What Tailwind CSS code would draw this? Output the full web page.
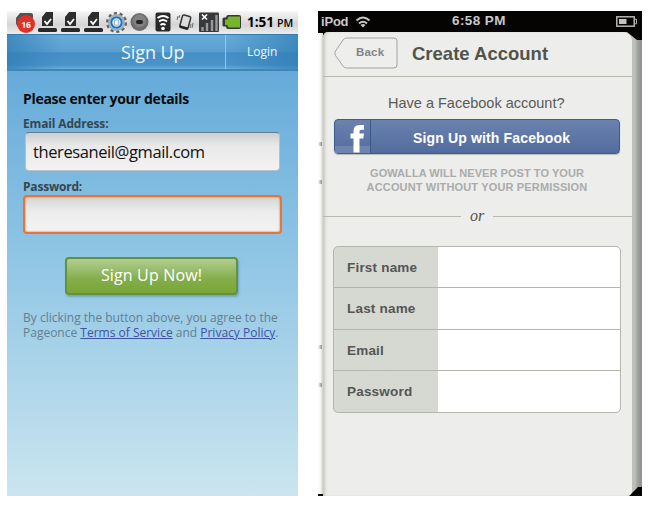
<!DOCTYPE html>
<html lang="en">
<head>
<meta charset="utf-8">
<title>Sign up screens</title>
<script src="https://cdn.jsdelivr.net/npm/@tailwindcss/browser@4"></script>
</head>
<body class="w-[655px] h-[509px] overflow-hidden bg-white">
<main class="flex gap-[20px] pl-[7px] pt-[11px]">

<!-- Pageonce -->
<section class="w-[291px] h-[485px] flex flex-col whitespace-nowrap font-['Open_Sans','Noto_Sans',sans-serif] bg-linear-to-b from-[#62a9d9] from-10% via-[#98cae6] via-58% to-[#cbe5ef]">
  <div class="h-[23px] shrink-0 flex bg-linear-to-b from-[#f6f6f6] via-[#d4d4d5] via-60% to-[#ededed]">
    <svg class="w-[236px] h-[23px]" viewBox="7 11 236 23">
      <path d="M16 18l4-5h11q2 0 2 2v15H20l-4-6z" fill="#575250"/>
      <circle cx="26" cy="24" r="9" fill="#df3127"/>
      <text x="26" y="27.6" text-anchor="middle" font-family="Open Sans, sans-serif" font-weight="700" font-size="8.5" fill="#fff">16</text>
      <g id="dl">
        <path d="M42 17l4-5h7v14H42z" fill="#2e2d2e"/>
        <rect x="38" y="28" width="19" height="4" rx="1.5" fill="#29292a"/>
        <path d="M44.500 21l2.500 3 4-5" fill="none" stroke="#fff" stroke-width="1.800"/>
      </g>
      <use href="#dl" x="23"/><use href="#dl" x="46"/>
      <circle cx="116.500" cy="22.500" r="9" fill="none" stroke="#625f5f" stroke-width="3" stroke-dasharray="3 2.650"/>
      <circle cx="116.500" cy="22.500" r="7.500" fill="#d9e5ee" stroke="#a3aeb6" stroke-width="2"/>
      <circle cx="116.500" cy="22.500" r="5.200" fill="#e6edf3" stroke="#1675bd" stroke-width="2"/>
      <rect x="114.500" y="20" width="4" height="5" fill="#f3f5f7" stroke="#a9b8c4"/>
      <circle cx="139.500" cy="22" r="9" fill="#6d6d6d"/>
      <circle cx="139.500" cy="21" r="6.500" fill="#818181"/>
      <rect x="136" y="20" width="7" height="4" rx="2" fill="#252525"/>
      <rect x="155.500" y="12.500" width="15" height="19" rx="2" fill="#292929"/>
      <g fill="none" stroke="#fff" stroke-width="1.900"><path d="M157.500 18q5.500-4 11 0M159 21.500q4-3 8 0M160.500 25q2.500-2 5 0"/></g>
      <circle cx="163" cy="28.500" r="1.800" fill="#fff"/>
      <g transform="rotate(15 185 22)"><rect x="181" y="15.500" width="8.500" height="13" rx="1.500" fill="#ddd" stroke="#333" stroke-width="1.500"/><path d="M181 27.500h8.500" stroke="#222" stroke-width="2.200"/></g>
      <path d="M180 15l-1 3M178 16l-1 4M191 24l-1 4M193 23l-1 5" stroke="#6b6b6b" fill="none"/>
      <rect x="199" y="12.500" width="20" height="19.500" rx="1" fill="#38393b"/>
      <path d="M202.500 31v-4M207 31v-8M212 31v-11M216.500 31v-16" stroke="#98999b" stroke-width="2.400"/>
      <path d="M202 14.500l5 5M207 14.500l-5 5" stroke="#fff" stroke-width="1.600"/>
      <path d="M228 15h11q2 0 2 2v10q0 2-2 2h-11q-2 0-2-2.500h-2q-1.500 0-1.500-1.500v-6q0-1.500 1.500-1.500h2q0-2.500 2-2.500z" fill="#343733"/>
      <path d="M228.500 16.500H240v11h-11.500q-1-1-1-2.500H225v-5.500h2.500q0-1.500 1-3z" fill="#76b52b"/>
    </svg>
    <div class="flex items-baseline pl-[4px] leading-[23px] text-black font-bold"><span class="text-[13.500px]">1:51</span><span class="text-[10.500px] ml-[3px] font-semibold">PM</span></div>
  </div>
  <header class="relative h-[37px] shrink-0 flex bg-[linear-gradient(to_bottom,#69abd8_0%,#5a9fd0_50%,#468fc5_52%,#4a93c7_88%,#6ab0dc_100%)] border-t border-[#357baa] border-b-2 border-b-[#4085b4] text-[#eef7fc]">
    <div class="flex-1 flex items-center pl-[114px] text-[18px] tracking-[-0.1px] bg-linear-to-r from-[#2d7db5]/70 to-transparent to-25%">Sign Up</div>
    <div class="w-[73px] border-l border-[#94c5e2] flex items-center pl-[21px] text-[12px] bg-linear-to-l from-[#2d7db5]/70 to-transparent"><span>Login</span></div>
  </header>
  <div class="flex flex-col pl-[16px] pt-[18px]">
    <h1 class="h-[20px] leading-[20px] text-[14px] tracking-[-0.300px] font-bold text-[#080b0e]"><span>Please enter your details</span></h1>
    <label class="mt-[6px] h-[17px] leading-[18px] text-[12px] tracking-[-0.150px] font-bold text-[#364650]"><span>Email Address:</span></label>
    <div class="ml-[2px] w-[255px] h-[39px] rounded-[4px] border border-[#b7c0c4] border-t-[#667d89] bg-linear-to-b from-[#cdcfcf] via-[#e9e9e9] via-35% to-[#f2f2f2] pl-[7px] leading-[38px] text-[16.500px] tracking-[-0.400px] text-[#111]"><span>theresaneil@gmail.com</span></div>
    <label class="mt-[7px] h-[17px] leading-[17px] text-[12px] tracking-[-0.200px] font-bold text-[#364650]"><span>Password:</span></label>
    <div class="w-[259px] h-[39px] rounded-[4px] border-2 border-[#ed7430] bg-linear-to-b from-[#d3d4d4] via-[#ececec] via-40% to-[#f3f3f3] shadow-[inset_0_0_2px_#777]"></div>
    <div class="ml-[42px] mt-[23px] w-[173px] h-[38px] rounded-[4px] border-2 border-[#64913b] bg-linear-to-b from-[#b2ce90] via-[#83ad49] via-60% to-[#79a637] shadow-[1px_2px_2px_#5486a088] text-center leading-[33px] text-[16px] tracking-[0.150px] text-white"><span>Sign Up Now!</span></div>
    <p class="mt-[15px] text-[12px] text-[#637f90] leading-[15px]"><span>By clicking the button above, you agree to the</span><br><span>Pageonce <a class="text-[#3f52a4] underline">Terms of Service</a> and <a class="text-[#3f52a4] underline">Privacy Policy</a>.</span></p>
  </div>
</section>

<!-- Gowalla -->
<section class="relative w-[324px] h-[485px] flex flex-col whitespace-nowrap font-['Liberation_Sans',Arial,sans-serif]">
  <div class="relative h-[21px] shrink-0 bg-[#060303] flex items-center pl-[3px] text-[13px] font-bold text-[#c9c9ca]">
    <span class="w-[34px] tracking-[-0.200px]">iPod</span>
    <svg class="w-[16px] h-[12px]" viewBox="0 0 16 12" fill="none" stroke="#c5c5c6" stroke-width="2"><path d="M1.500 4.500q6.500-6 13 0M4 7.500q4-3.500 8 0"/><path d="M8 11.500L5.500 9q2.500-2 5 0z" fill="#c5c5c6" stroke="none"/></svg>
    <span class="ml-[81px] flex-1 text-[13.500px] tracking-[0.400px]">6:58 PM</span>
    <svg class="w-[22px] h-[11px] mr-[4px]" viewBox="0 0 22 11"><rect x=".8" y=".8" width="17.400" height="9.400" fill="none" stroke="#b5b5b6" stroke-width="1.500"/><path d="M3 3h7.500v5H3z" fill="#c3c3c4"/><path d="M18.500 3.200h2v4.600h-2" fill="none" stroke="#b5b5b6"/></svg>
  </div>
  <div class="flex-1 flex overflow-hidden bg-[#060303]">
    <div class="w-[5px] shrink-0 mt-px mb-[2px] flex flex-col items-start pt-[109px] bg-linear-to-r from-white via-[#f3f3f1] to-[#d0d1cb]">
      <i class="w-[4px] h-[4px] bg-linear-to-r from-white to-[#8c8f8d]"></i>
      <i class="mt-[34px] w-[4px] h-[4px] bg-linear-to-r from-white to-[#8c8f8d]"></i>
      <i class="mt-[161px] w-[4px] h-[4px] bg-linear-to-r from-white to-[#8c8f8d]"></i>
      <i class="mt-[34px] w-[4px] h-[4px] bg-linear-to-r from-white to-[#8c8f8d]"></i>
    </div>
    <div class="relative z-10 w-[309px] rounded-tl-[5px] rounded-tr-[9px] rounded-br-[5px] bg-[#ededeb] shadow-[inset_3px_0_3px_-1px_#c5c7be]">
      <header class="h-[45px] border-b border-[#b8bab2] flex items-center">
        <div class="relative -top-px ml-[11px] w-[65px] h-[32px]">
          <svg class="absolute inset-0" width="65" height="32" viewBox="0 0 65 32" fill="#eeeeec" stroke="#a3a3a1"><path d="M12.500 1H60q3 0 3 3v24q0 3-3 3H12.500q-2 0-3.500-2L1.500 18.500q-1.500-2.500 0-4.500L9 3q1.500-2 3.500-2z"/></svg>
          <span class="absolute left-[22px] top-0 leading-[30px] text-[11.500px] tracking-[0.200px] font-bold text-[#83838a]">Back</span>
        </div>
        <h2 class="relative ml-[13px] text-[18.500px] font-bold text-[#51544b]"><span>Create Account</span></h2>
      </header>
      <div class="pt-[16px] pl-[11px] flex flex-col">
        <p class="w-[286px] pl-[54px] h-[20px] leading-[20px] text-[14.500px] text-[#5a5a5a]"><span>Have a Facebook account?</span></p>
        <div class="mt-[6px] w-[286px] h-[35px] rounded-[4px] border border-[#3f5a8c] bg-linear-to-b from-[#6b82ae] to-[#536c9e] flex shadow-[0_1px_1px_#bbb]">
          <svg class="w-[36px] h-[33px]" viewBox="335 120 36 33"><path d="M335 146h35v7h-35z" fill="#6f84ae"/><path d="M370.500 120v33" stroke="#3d588c"/><path d="M353.500 152.500V138.500H350.500V133.500H353.500V131q0-6 6-6H364v4.800h-2.700q-1.800 0-1.800 1.800v1.900h4.500l-.7 5h-3.800v14z" fill="#fff"/></svg>
          <span class="ml-[42px] leading-[36px] text-[14px] tracking-[0.150px] font-bold text-white"><span>Sign Up with Facebook</span></span>
        </div>
        <p class="mt-[12px] w-[286px] text-center leading-[14px] text-[11px] font-bold text-[#aaabac]"><span class="tracking-[0.050px]">GOWALLA WILL NEVER POST TO YOUR</span><br><span class="tracking-[0.150px]">ACCOUNT WITHOUT YOUR PERMISSION</span></p>
        <div class="-ml-[11px] mt-[11px] h-[22px] flex items-center">
          <i class="w-[138px] h-px bg-[#b8b9b1]"></i>
          <span class="w-[32px] text-center font-['Liberation_Serif',serif] italic text-[16px] leading-[22px] text-[#51544b]">or</span>
          <i class="flex-1 h-px bg-[#b8b9b1]"></i>
        </div>
        <div class="-ml-px mt-[19px] w-[288px] h-[167px] rounded-[5px] border border-[#b3b6ad] overflow-hidden grid grid-rows-4 divide-y divide-[#b5b5ae] bg-linear-to-r from-[#d6d9d2] from-[104px] to-white to-[104px] text-[13.500px] tracking-[0.200px] font-bold text-[#555]">
          <div class="flex items-center pt-[2px] pl-[13px]"><span>First name</span></div>
          <div class="flex items-center pt-[2px] pl-[13px]"><span>Last name</span></div>
          <div class="flex items-center pt-[2px] pl-[13px]"><span>Email</span></div>
          <div class="flex items-center pt-[2px] pl-[13px]"><span>Password</span></div>
        </div>
      </div>
    </div>
    <!-- stacked page edges -->
    <div class="flex-1 -ml-[9px] bg-[linear-gradient(to_right,#c3c6be_0px,#bcbfb8_12px,#a6a9a3_14px,#989b98_16px,#8e918f_19px)] [clip-path:polygon(0_0,4px_0,14px_8px,100%_8px,100%_calc(100%_-_9px),15px_calc(100%_-_9px),6px_100%,0_100%)]"></div>
  </div>
</section>
</main>
</body>
</html>
